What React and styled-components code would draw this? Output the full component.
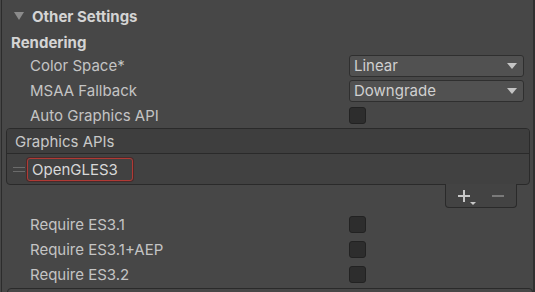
import React from "react";
import styled, { createGlobalStyle } from "styled-components";

const Global = createGlobalStyle`
  html, body { margin: 0; padding: 0; background: #474747; }
  body { font-family: Inter, "Noto Sans", sans-serif; }
  * { box-sizing: border-box; }
`;

const Frame = styled.div`
  position: relative;
  width: 535px;
  height: 292px;
  overflow: hidden;
  background: #474747;
  display: flex;
`;

const LeftEdge = styled.div`
  width: 1px;
  margin-left: 1px;
  background: #2c2c2c;
  flex: none;
`;

const ScrollStrip = styled.div`
  width: 2px;
  background: #303030;
  flex: none;
  margin-left: auto;
`;

const Panel = styled.div`
  flex: 1;
  display: flex;
  flex-direction: column;
  min-width: 0;
  & > * { flex-shrink: 0; }
`;

const Foldout = styled.div`
  height: 32px;
  display: flex;
  align-items: center;
  padding-left: 12px;
  gap: 8px;
  color: #d4d4d4;
  font-weight: 700;
  font-size: 15px;
`;

const Triangle = styled.span`
  width: 0;
  height: 0;
  border-left: 5px solid transparent;
  border-right: 5px solid transparent;
  border-top: 8px solid #8b8b8b;
`;

const SectionLabel = styled.div`
  height: 21px;
  display: flex;
  align-items: center;
  padding-left: 9px;
  color: #d4d4d4;
  font-weight: 700;
  font-size: 15px;
`;

const Row = styled.div`
  height: 25px;
  display: flex;
  align-items: center;
  padding-left: 28px;
`;

const Label = styled.div`
  width: 319px;
  color: #c4c4c4;
  font-size: 15px;
`;

const Dropdown = styled.div`
  width: 175px;
  height: 22px;
  background: #515151;
  border: 1px solid #2f2f2f;
  border-radius: 3px;
  display: flex;
  align-items: center;
  padding: 0 6px 0 4px;
  color: #d0d0d0;
  font-size: 15px;
  justify-content: space-between;
`;

const Caret = styled.span`
  width: 0;
  height: 0;
  border-left: 5px solid transparent;
  border-right: 5px solid transparent;
  border-top: 6px solid #c4c4c4;
`;

const Checkbox = styled.div`
  width: 17px;
  height: 17px;
  background: #2d2d2d;
  border: 1px solid #222222;
  border-radius: 3px;
`;

const List = styled.div`
  margin: 0 3px 0 4px;
  display: flex;
  flex-direction: column;
`;

const ListBox = styled.div`
  border: 1px solid #2a2a2a;
  border-radius: 4px;
  background: #414141;
  overflow: hidden;
`;

const ListHeader = styled.div`
  height: 25px;
  background: #3e3e3e;
  border-bottom: 1px solid #2a2a2a;
  display: flex;
  align-items: center;
  padding-left: 8px;
  color: #c8c8c8;
  font-size: 15px;
`;

const ListBody = styled.div`
  height: 30px;
  display: flex;
  align-items: center;
  padding-left: 6px;
  gap: 2px;
`;

const Handle = styled.div`
  width: 12px;
  height: 5px;
  border-top: 1px solid #6b6b6b;
  border-bottom: 1px solid #6b6b6b;
`;

const Item = styled.div`
  width: 106px;
  height: 23px;
  border: 1.5px solid #b03a35;
  border-radius: 3px;
  box-shadow: 0 0 0 1px rgba(80, 20, 20, 0.5);
  display: flex;
  align-items: center;
  padding-left: 4px;
  color: #d8d8d8;
  font-size: 15px;
`;

const Footer = styled.div`
  align-self: flex-end;
  margin-right: 13px;
  margin-top: -1px;
  width: 72px;
  height: 24px;
  border: 1px solid #2a2a2a;
  border-top: none;
  border-radius: 0 0 4px 4px;
  background: #434343;
  display: flex;
  align-items: center;
  padding-left: 12px;
  gap: 22px;
`;

const IconBtn = styled.div`
  position: relative;
  width: 12px;
  height: 12px;
  display: flex;
  align-items: center;
  justify-content: center;
`;

const Bar = styled.span`
  position: absolute;
  background: ${(p) => p.$color};
  ${(p) => (p.$vertical ? "width: 2px; height: 12px;" : "width: 12px; height: 2px;")}
`;

const SmallCaret = styled.span`
  position: absolute;
  right: -6px;
  bottom: -3px;
  width: 0;
  height: 0;
  border-left: 3px solid transparent;
  border-right: 3px solid transparent;
  border-top: 3px solid #c8c8c8;
`;

const Spacer = styled.div`
  height: 4px;
`;

const BottomBox = styled.div`
  margin: 1px 0 0 5px;
  height: 10px;
  border: 1px solid #2a2a2a;
  border-radius: 4px 4px 0 0;
  background: #474747;
`;

export default function App() {
  return (
    <>
      <Global />
      <Frame>
        <LeftEdge />
        <Panel>
          <Foldout>
            <Triangle />
            Other Settings
          </Foldout>
          <SectionLabel>Rendering</SectionLabel>
          <Row>
            <Label>Color Space*</Label>
            <Dropdown>
              Linear
              <Caret />
            </Dropdown>
          </Row>
          <Row>
            <Label>MSAA Fallback</Label>
            <Dropdown>
              Downgrade
              <Caret />
            </Dropdown>
          </Row>
          <Row>
            <Label>Auto Graphics API</Label>
            <Checkbox />
          </Row>
          <List>
            <ListBox>
              <ListHeader>Graphics APIs</ListHeader>
              <ListBody>
                <Handle />
                <Item>OpenGLES3</Item>
              </ListBody>
            </ListBox>
            <Footer>
              <IconBtn>
                <Bar $color="#c8c8c8" />
                <Bar $color="#c8c8c8" $vertical />
                <SmallCaret />
              </IconBtn>
              <IconBtn>
                <Bar $color="#7a7a7a" />
              </IconBtn>
            </Footer>
          </List>
          <Spacer />
          <Row>
            <Label>Require ES3.1</Label>
            <Checkbox />
          </Row>
          <Row>
            <Label>Require ES3.1+AEP</Label>
            <Checkbox />
          </Row>
          <Row>
            <Label>Require ES3.2</Label>
            <Checkbox />
          </Row>
          <BottomBox />
        </Panel>
        <ScrollStrip />
      </Frame>
    </>
  );
}
